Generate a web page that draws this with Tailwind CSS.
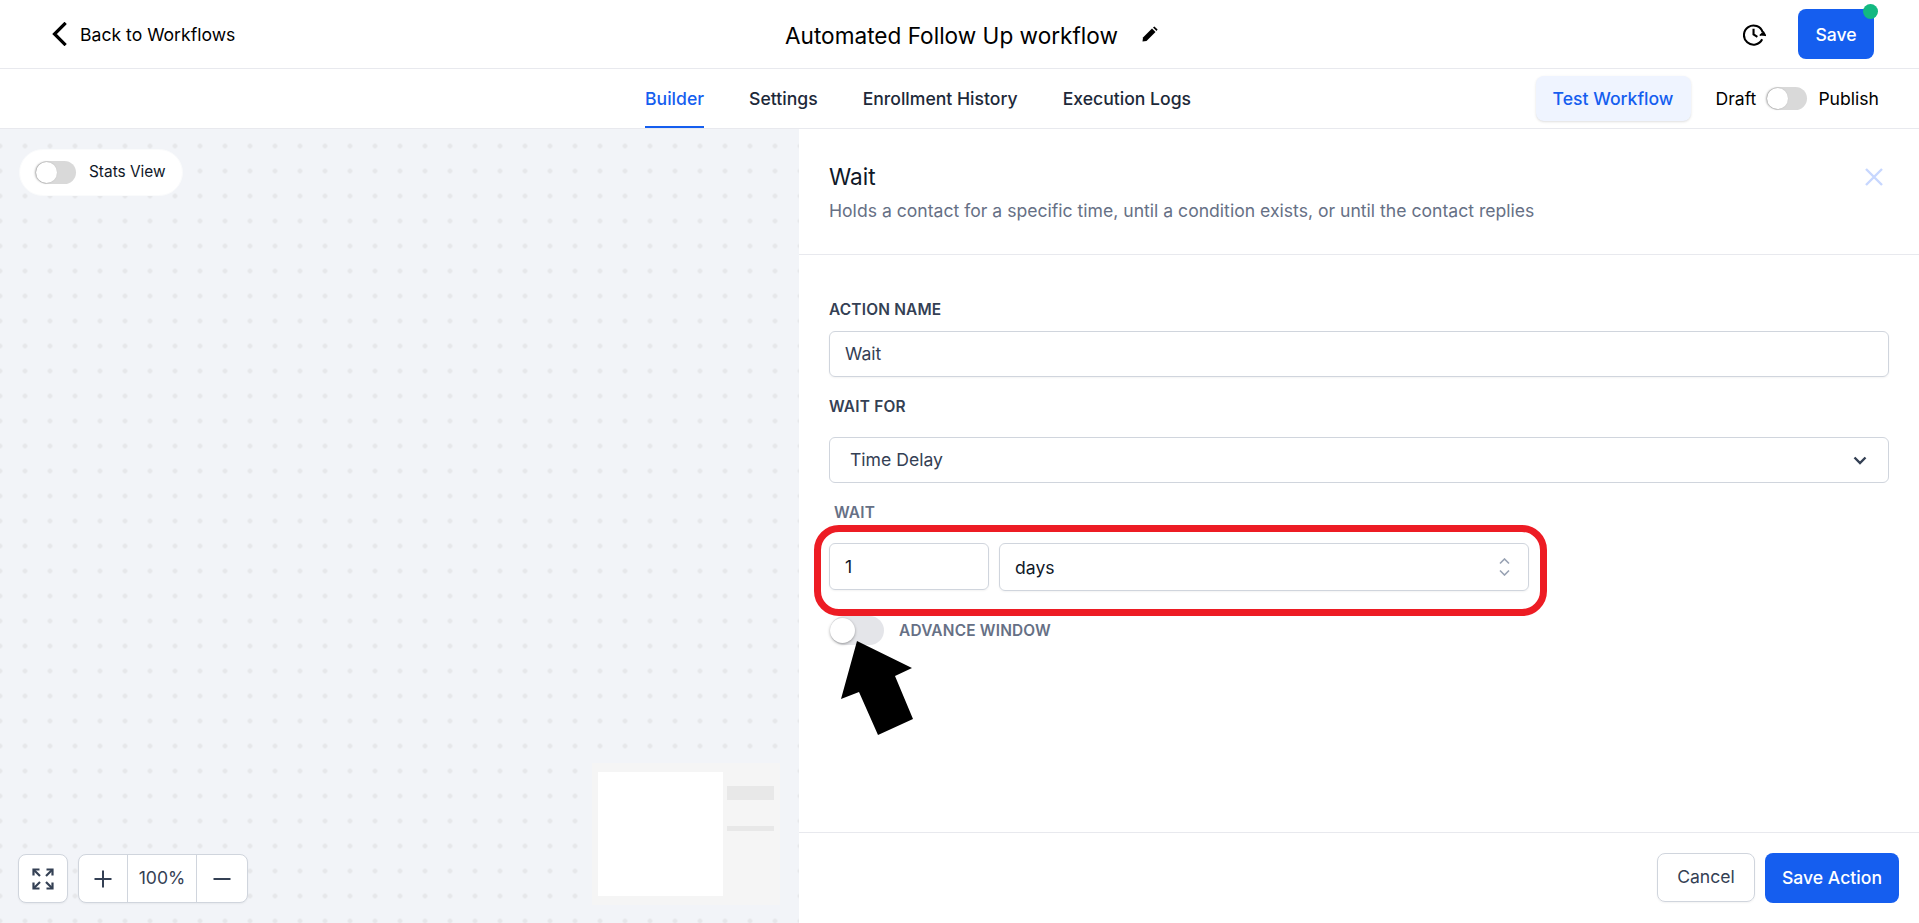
<!DOCTYPE html>
<html lang="en">
<head>
<meta charset="utf-8">
<title>Automated Follow Up workflow</title>
<script src="https://cdn.jsdelivr.net/npm/@tailwindcss/browser@4"></script>
</head>
<body class="m-0 bg-white font-['Inter','Liberation_Sans',sans-serif] text-black overflow-hidden">
<div class="w-[1919px] h-[923px] flex flex-col overflow-hidden">
  <!-- top bar -->
  <header class="h-[69px] shrink-0 border-b border-[#e8e9ee] flex items-center relative">
    <div class="flex items-center ml-[52px]">
      <svg class="w-[15px] h-[24px]" viewBox="0 0 15 24" fill="none" stroke="#000" stroke-width="3.2" stroke-linecap="square"><path d="M12.5 2 L2.5 12 L12.5 22"/></svg>
      <span class="ml-[13px] pt-[2px] text-[17.6px] leading-6">Back to Workflows</span>
    </div>
    <div class="absolute left-[785px] top-[20px] flex items-center">
      <span class="pt-[2px] text-[22.6px] leading-7 font-normal">Automated Follow Up workflow</span>
      <svg class="ml-[24px] mb-[2px] w-[16px] h-[16px]" viewBox="0 0 16 16" fill="#000"><path d="M0.5 15.5 L1 11.5 L10 2.5 L13.5 6 L4.5 15 Z"/><path d="M11 1.5 L12.4 0.4 L15.6 3.6 L14.5 5 Z"/></svg>
    </div>
    <div class="ml-auto mr-[45px] flex items-center">
      <svg class="w-[23px] h-[23px] mr-[32px]" viewBox="0 0 24 24" fill="none" stroke="#000" stroke-width="2.2"><path d="M20.5 9.5 A10 10 0 1 0 20 17"/><path d="M11 6 V12 L15 14.5"/><path d="M17.5 13 L21.5 9.5 L23.8 13.5" stroke-width="1.4" fill="#000"/></svg>
      <div class="relative">
        <button class="w-[76px] h-[50px] pt-[2px] rounded-lg bg-[#155eef] text-white text-[17.6px] font-medium">Save</button>
        <span class="absolute -top-[5px] -right-[4px] w-[15px] h-[15px] rounded-full bg-[#12b981]"></span>
      </div>
    </div>
  </header>
  <!-- tabs bar -->
  <nav class="h-[60px] shrink-0 border-b border-[#e8e9ee] flex relative">
    <div class="ml-[645px] flex gap-[45px] text-[17.6px] leading-6 text-[#1d2939]">
      <a class="h-[59px] pt-[18px] border-b-2 border-[#155eef] text-[#155eef] font-medium">Builder</a>
      <a class="h-[59px] pt-[18px] font-medium">Settings</a>
      <a class="h-[59px] pt-[18px] font-medium">Enrollment History</a>
      <a class="h-[59px] pt-[18px] font-medium">Execution Logs</a>
    </div>
    <div class="ml-auto mr-[40px] flex items-center text-[17.6px]">
      <button class="w-[155px] h-[45px] -mt-[1px] pt-[2px] rounded-lg bg-[#eff4ff] text-[#155eef] font-medium shadow-sm">Test Workflow</button>
      <span class="ml-[25px] mt-[2px]">Draft</span>
      <span class="ml-[11px] w-[40px] h-[23px] rounded-full bg-[#d9d9d9] relative"><span class="absolute left-0 top-[1px] w-[21px] h-[21px] rounded-full bg-white shadow-[-1px_0_2px_rgba(0,0,0,0.35)]"></span></span>
      <span class="ml-[11px] mt-[2px]">Publish</span>
    </div>
  </nav>
  <!-- main -->
  <main class="flex-1 flex min-h-0">
    <section class="w-[799px] shrink-0 relative bg-[#f2f4f8] bg-[radial-gradient(circle,#e6e7ea_2px,transparent_2.6px)] bg-size-[25px_25px] bg-position-[-12.5px_4.5px]">
      <div class="absolute left-[19px] top-[20px] w-[164px] h-[47px] rounded-full bg-white border border-[#fafbfc] flex items-center pl-[16px]">
        <span class="w-[40px] h-[23px] rounded-full bg-[#d9d9d9] relative"><span class="absolute left-0 top-[1px] w-[21px] h-[21px] rounded-full bg-white shadow-[-1px_0_2px_rgba(0,0,0,0.35)]"></span></span>
        <span class="ml-[13px] pb-[2px] text-[15.4px] font-normal text-[#101828]">Stats View</span>
      </div>
      <button class="absolute left-[18px] top-[725px] w-[50px] h-[49px] rounded-lg bg-white border border-[#d0d5dd] flex items-center justify-center shadow-xs">
        <svg class="w-[22px] h-[22px]" viewBox="0 0 22 22" fill="none" stroke="#344054" stroke-width="2.2"><path d="M1.5 7.5V1.5H7.5" /><path d="M2 2L8 8"/><path d="M14.5 1.5H20.5V7.5"/><path d="M20 2L14 8"/><path d="M1.5 14.5V20.5H7.5"/><path d="M2 20L8 14"/><path d="M14.5 20.5H20.5V14.5"/><path d="M20 20L14 14"/></svg>
      </button>
      <div class="absolute left-[78px] top-[725px] w-[170px] h-[49px] rounded-lg bg-white border border-[#d0d5dd] flex items-center shadow-xs text-[#344054]">
        <span class="w-[48px] h-full flex items-center justify-center"><svg class="w-[18px] h-[18px]" viewBox="0 0 18 18" stroke="#344054" stroke-width="2"><path d="M9 0.5V17.5M0.5 9H17.5"/></svg></span>
        <span class="w-[70px] h-full border-x border-[#d0d5dd] flex items-center justify-center text-[17.6px]">100%</span>
        <span class="flex-1 h-full flex items-center justify-center"><svg class="w-[18px] h-[18px]" viewBox="0 0 18 18" stroke="#344054" stroke-width="2"><path d="M0.5 9H17.5"/></svg></span>
      </div>
      <div class="absolute left-[592px] top-[634px] w-[188px] h-[142px] bg-[#f5f5f5] flex pl-[6px] pt-[9px]">
        <div class="w-[125px] h-[124px] bg-white"></div>
        <div class="ml-[4px] w-[47px] flex flex-col pt-[14px]">
          <div class="h-[14px] bg-[#e8e8e8]"></div>
          <div class="mt-[26px] h-[5px] bg-[#e8e8e8]"></div>
        </div>
      </div>
    </section>
    <section class="flex-1 flex flex-col min-w-0 bg-white relative">
      <div class="h-[126px] shrink-0 border-b border-[#e8e9ee] px-[30px] pt-[34px] relative">
        <h2 class="text-[22.6px] leading-7 font-normal text-[#101828]">Wait</h2>
        <p class="mt-[8px] text-[17.6px] leading-6 text-[#667085]">Holds a contact for a specific time, until a condition exists, or until the contact replies</p>
        <svg class="absolute right-[36px] top-[39px] w-[18px] h-[18px]" viewBox="0 0 18 18" stroke="#c7d7fe" stroke-width="2.4"><path d="M1 1L17 17M17 1L1 17"/></svg>
      </div>
      <div class="flex-1 pl-[30px] pr-[30px] relative">
        <div class="mt-[45px] text-[15.4px] leading-5 font-semibold tracking-[0.2px] text-[#344054]">ACTION NAME</div>
        <div class="mt-[11px] h-[46px] rounded-md border border-[#d0d5dd] shadow-xs flex items-center pl-[15px] text-[17.6px] text-[#344054]">Wait</div>
        <div class="mt-[20px] text-[15.4px] leading-5 font-semibold tracking-[0.2px] text-[#344054]">WAIT FOR</div>
        <div class="mt-[20px] h-[46px] rounded-md border border-[#d0d5dd] flex items-center pl-[20px] pr-[21px] text-[17.6px] text-[#344054]">
          <span>Time Delay</span>
          <svg class="ml-auto w-[14px] h-[9px]" viewBox="0 0 14 9" fill="none" stroke="#344054" stroke-width="2.4"><path d="M1.5 1.5L7 7L12.5 1.5"/></svg>
        </div>
        <div class="mt-[20px] ml-[5px] text-[15.4px] leading-5 font-semibold tracking-[0.2px] text-[#667085]">WAIT</div>
        <div class="mt-[20px] flex gap-[10px] w-[700px]">
          <div class="w-[160px] h-[47px] pt-[2px] rounded-md border border-[#d0d5dd] flex items-center pl-[15px] text-[17.6px] text-[#101828] shadow-xs">1</div>
          <div class="flex-1 h-[48px] rounded-md border border-[#d0d5dd] flex items-center pl-[15px] pr-[18px] text-[17.6px] text-[#101828] shadow-xs">
            <span class="pt-[2px]">days</span>
            <svg class="ml-auto w-[11px] h-[18px]" viewBox="0 0 11 18" fill="none" stroke="#98a2b3" stroke-width="1.6"><path d="M1 5.5L5.5 1L10 5.5M1 12.5L5.5 17L10 12.5"/></svg>
          </div>
        </div>
        <div class="mt-[25px] flex items-center">
          <span class="ml-[1px] w-[54px] h-[29px] rounded-full bg-[#e4e5e9] relative"><span class="absolute left-0 top-[2px] w-[25px] h-[25px] rounded-full bg-white shadow-[0_1px_3px_rgba(0,0,0,0.35)]"></span></span>
          <span class="ml-[15px] text-[15.4px] leading-5 font-semibold tracking-[0.2px] text-[#667085]">ADVANCE WINDOW</span>
        </div>
        <!-- annotations over the form -->
        <div class="absolute left-[15px] top-[270px] w-[733px] h-[91px] rounded-[25px] border-[7px] border-[#ed1c24]"></div>
        <svg class="absolute left-[41px] top-[386px] w-[73px] h-[95px]" viewBox="0 0 73 95" fill="#000"><path d="M17 0L72 27L55 35L73 78L38 94L19 51L1 58Z"/></svg>
      </div>
      <div class="h-[91px] shrink-0 border-t border-[#e8e9ee] flex justify-end items-start pt-[20px] pr-[20px] gap-[10px] text-[17.6px] font-medium">
        <button class="w-[98px] h-[49px] rounded-lg border border-[#d0d5dd] text-[#344054] shadow-xs font-normal">Cancel</button>
        <button class="w-[134px] h-[50px] rounded-lg bg-[#155eef] text-white">Save Action</button>
      </div>
    </section>
  </main>
</div>
</body>
</html>
